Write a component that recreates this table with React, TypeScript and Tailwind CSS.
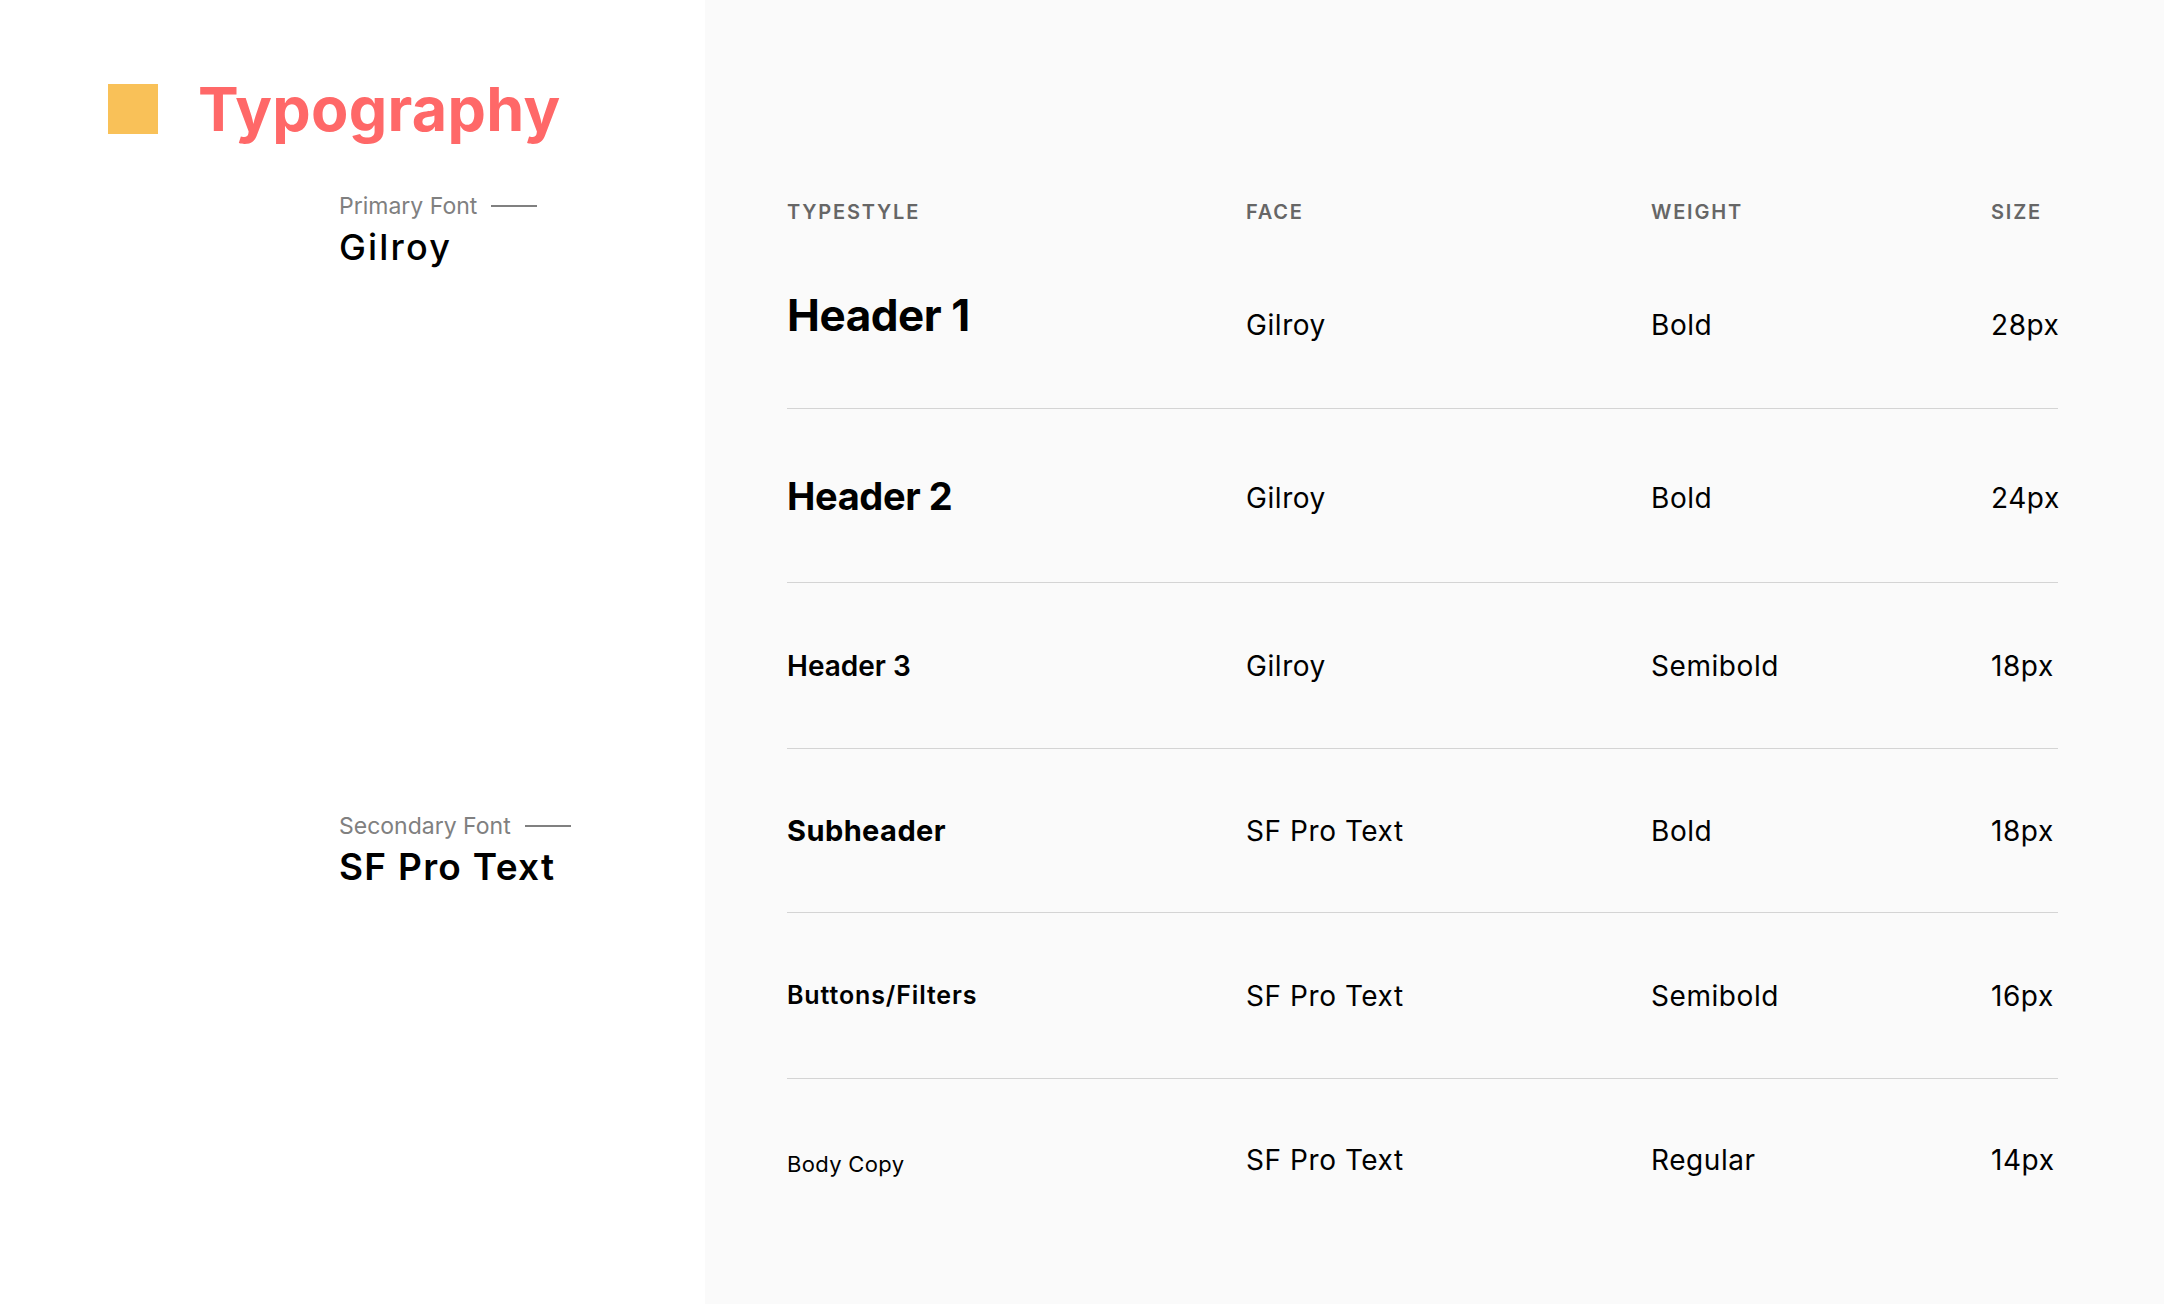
import React from 'react';

const SANS = "font-['Inter','Liberation_Sans',sans-serif]";

interface TypeRow {
  name: string;
  nameClass: string;
  face: string;
  weight: string;
  size: string;
  rowClass: string;
}

const ROWS: TypeRow[] = [
  { name: 'Header 1', nameClass: 'text-[44px] font-bold tracking-[-0.01em] mb-[20px]', face: 'Gilroy', weight: 'Bold', size: '28px', rowClass: 'h-[168px] border-b' },
  { name: 'Header 2', nameClass: 'text-[38px] font-bold tracking-[-0.01em] mb-[4px]', face: 'Gilroy', weight: 'Bold', size: '24px', rowClass: 'h-[174px] border-b pt-[4px]' },
  { name: 'Header 3', nameClass: 'text-[28px] font-semibold', face: 'Gilroy', weight: 'Semibold', size: '18px', rowClass: 'h-[166px] border-b' },
  { name: 'Subheader', nameClass: 'text-[29px] font-bold tracking-[0.015em]', face: 'SF Pro Text', weight: 'Bold', size: '18px', rowClass: 'h-[164px] border-b' },
  { name: 'Buttons/Filters', nameClass: 'text-[25px] font-semibold tracking-[0.035em]', face: 'SF Pro Text', weight: 'Semibold', size: '16px', rowClass: 'h-[166px] border-b' },
  { name: 'Body Copy', nameClass: 'text-[22px] font-normal tracking-[0.015em] mt-[8px]', face: 'SF Pro Text', weight: 'Regular', size: '14px', rowClass: 'h-[162px]' },
];

const FontLabel: React.FC<{ label: string; font: string; fontClass: string }> = ({ label, font, fontClass }) => (
  <div className="flex flex-col gap-[5px]">
    <div className="flex items-center">
      <span className="text-[23px] leading-[28px] text-[#808080]">{label}</span>
      <span className="ml-[14px] h-[2px] w-[46px] bg-[#808080]" />
    </div>
    <div className={`leading-[44px] text-black ${fontClass}`}>{font}</div>
  </div>
);

export default function App() {
  return (
    <div className={`flex min-h-[1304px] w-full ${SANS}`}>
      {/* left: title + font families */}
      <div className="w-[705px] shrink-0 bg-white pt-[84px]">
        <div className="flex items-center pl-[108px]">
          <div className="h-[50px] w-[50px] bg-[#f9c158]" />
          <h1 className="ml-[40px] text-[61px] font-bold leading-[50px] tracking-[0.005em] text-[#ff6868]">Typography</h1>
        </div>
        <div className="pl-[339px]">
          <div className="mt-[58px]">
            <FontLabel label="Primary Font" font="Gilroy" fontClass="text-[36px] font-medium tracking-[0.06em]" />
          </div>
          <div className="mt-[543px]">
            <FontLabel label="Secondary Font" font="SF Pro Text" fontClass="text-[37px] font-semibold tracking-[0.035em]" />
          </div>
        </div>
      </div>

      {/* right: type scale table */}
      <div className="flex-1 bg-[#fafafa] pl-[82px] pt-[200px]">
        <div className="w-[1271px]">
          <div className="grid grid-cols-[459px_405px_340px_1fr] text-[20px] font-semibold uppercase leading-[24px] tracking-[0.09em] text-[#666666]">
            <div>Typestyle</div>
            <div>Face</div>
            <div>Weight</div>
            <div>Size</div>
          </div>
          <div className="mt-[17px]">
            {ROWS.map((r) => (
              <div
                key={r.name}
                className={`grid grid-cols-[459px_405px_340px_1fr] items-center border-[#d4d4d4] text-black ${r.rowClass}`}
              >
                <div className={`leading-none ${r.nameClass}`}>{r.name}</div>
                <div className="text-[28px] leading-none tracking-[0.02em]">{r.face}</div>
                <div className="text-[28px] leading-none tracking-[0.02em]">{r.weight}</div>
                <div className="text-[28px] leading-none tracking-[0.02em]">{r.size}</div>
              </div>
            ))}
          </div>
        </div>
      </div>
    </div>
  );
}
